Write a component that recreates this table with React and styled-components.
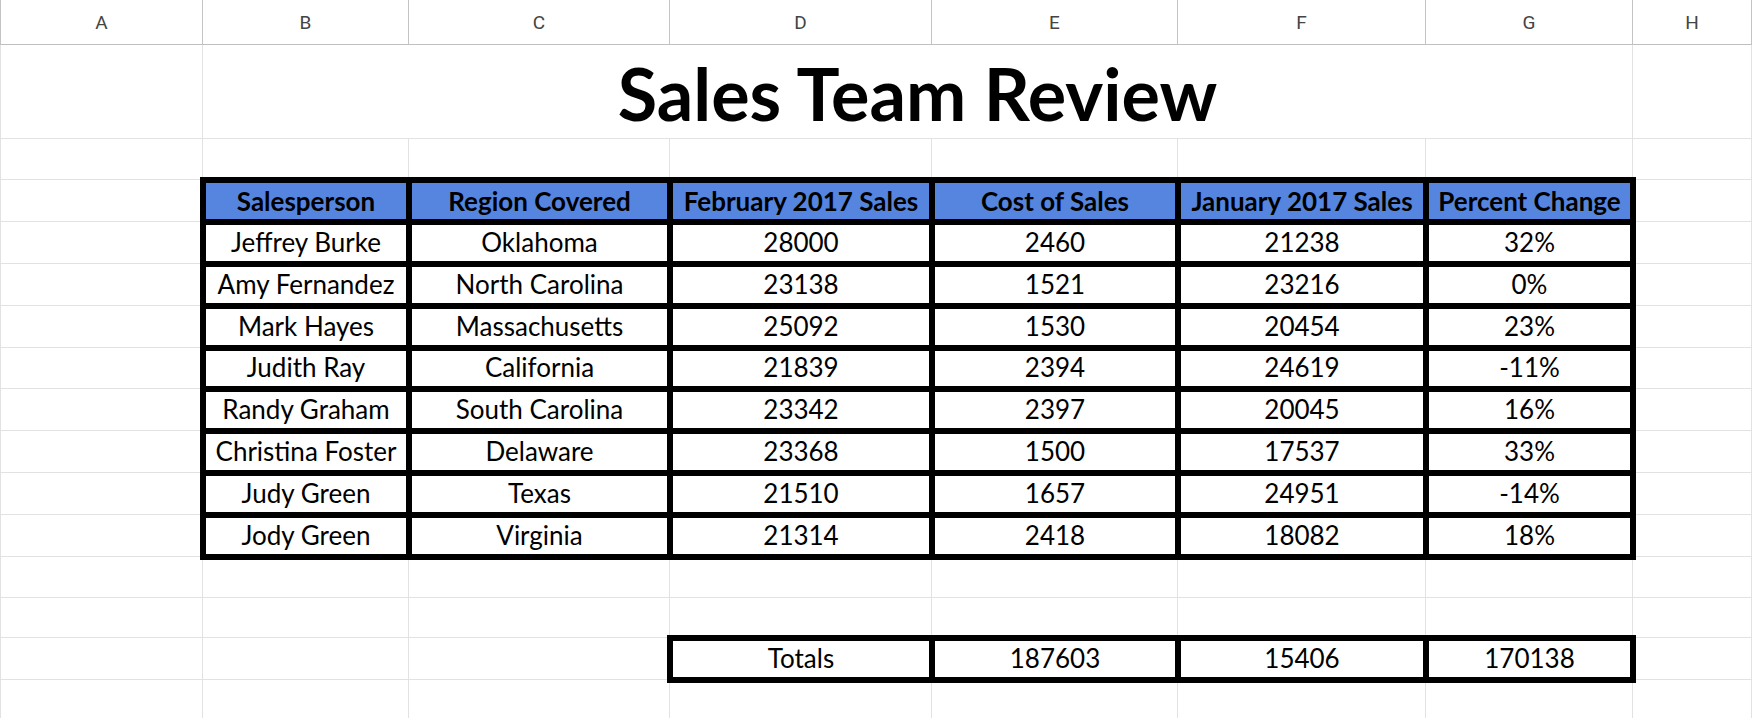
import React from 'react'
import styled, {createGlobalStyle} from 'styled-components'

const GlobalStyle = createGlobalStyle`
  html, body {
    margin: 0;
    padding: 0;
    background: #fff;
    overflow: hidden;
  }
  * { box-sizing: border-box; }
`

const Sheet = styled.div`
  display: grid;
  grid-template-columns: 203px 206px 261px 262px 246px 248px 207px 1fr;
  grid-template-rows: 45px 94px 41px 42px 42px 42px 42px 41px 42px 42px 42px 42px 41px 40px 42px 60px;
  width: 1752px;
  height: 718px;
  overflow: hidden;
  font-family: Lato, "Liberation Sans", sans-serif;
  color: #000;
`

const ColHead = styled.div`
  display: flex;
  align-items: center;
  justify-content: center;
  border-right: 1px solid #c4c4c4;
  border-bottom: 1px solid #c0c0c0;
  border-left: ${p => (p.$first ? '1px solid #c4c4c4' : 'none')};
  font-family: Roboto, "Liberation Sans", sans-serif;
  font-size: 19px;
  color: #444;
`

const Cell = styled.div`
  border-right: 1px solid #e2e2e2;
  border-bottom: 1px solid #e2e2e2;
  border-left: ${p => (p.$first ? '1px solid #e2e2e2' : 'none')};
`

const Title = styled(Cell)`
  grid-column: 2 / span 6;
  display: flex;
  align-items: center;
  justify-content: center;
  padding-top: 3px;
  font-size: 72px;
  font-weight: 700;
  white-space: nowrap;
`

const Table = styled.div`
  grid-column: 2 / span 6;
  grid-row: span 9;
  margin: -3px;
  z-index: 1;
  display: grid;
  grid-template-columns: 200px 255px 256px 240px 242px 201px;
  grid-template-rows: 36px 36px 36px 36px 35px 36px 36px 36px 36px;
  gap: 6px;
  padding: 6px;
  background: #000;
`

const Totals = styled.div`
  grid-column: 4 / span 4;
  margin: -3px;
  z-index: 1;
  display: grid;
  grid-template-columns: 256px 240px 242px 201px;
  gap: 6px;
  padding: 6px;
  background: #000;
`

const TCell = styled.div`
  display: flex;
  align-items: center;
  justify-content: center;
  padding-bottom: ${p => (p.$head ? 0 : 3)}px;
  background: ${p => (p.$head ? '#5585df' : '#fff')};
  font-weight: ${p => (p.$head ? 700 : 400)};
  font-size: 26px;
  white-space: nowrap;
  overflow: hidden;
`

const letters = ['A', 'B', 'C', 'D', 'E', 'F', 'G', 'H']

const headers = ['Salesperson', 'Region Covered', 'February 2017 Sales', 'Cost of Sales', 'January 2017 Sales', 'Percent Change']

const rows = [
  ['Jeffrey Burke', 'Oklahoma', '28000', '2460', '21238', '32%'],
  ['Amy Fernandez', 'North Carolina', '23138', '1521', '23216', '0%'],
  ['Mark Hayes', 'Massachusetts', '25092', '1530', '20454', '23%'],
  ['Judith Ray', 'California', '21839', '2394', '24619', '-11%'],
  ['Randy Graham', 'South Carolina', '23342', '2397', '20045', '16%'],
  ['Christina Foster', 'Delaware', '23368', '1500', '17537', '33%'],
  ['Judy Green', 'Texas', '21510', '1657', '24951', '-14%'],
  ['Jody Green', 'Virginia', '21314', '2418', '18082', '18%'],
]

const totals = ['Totals', '187603', '15406', '170138']

const EmptyRow = () => letters.map((l, i) => <Cell key={l} $first={i === 0} />)

export default function App() {
  return (
    <>
      <GlobalStyle />
      <Sheet>
        {letters.map((l, i) => (
          <ColHead key={l} $first={i === 0}>{l}</ColHead>
        ))}

        <Cell $first />
        <Title>Sales Team Review</Title>
        <Cell />

        <EmptyRow />

        <Cell $first />
        <Table>
          {headers.map(h => (
            <TCell key={h} $head>{h}</TCell>
          ))}
          {rows.map((r, i) => r.map((v, j) => <TCell key={i + '-' + j}>{v}</TCell>))}
        </Table>
        <Cell />
        {rows.map((r, i) => (
          <React.Fragment key={i}>
            <Cell $first />
            <Cell />
          </React.Fragment>
        ))}

        <EmptyRow />
        <EmptyRow />

        <Cell $first />
        <Cell />
        <Cell />
        <Totals>
          {totals.map(t => (
            <TCell key={t}>{t}</TCell>
          ))}
        </Totals>
        <Cell />

        <EmptyRow />
      </Sheet>
    </>
  )
}
